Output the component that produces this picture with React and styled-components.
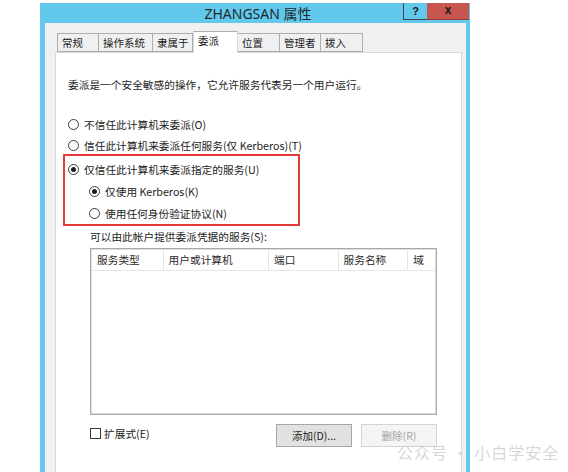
import React from "react";
import styled, { createGlobalStyle } from "styled-components";

const GlobalStyle = createGlobalStyle`
  html, body {
    margin: 0;
    padding: 0;
    background: #fff;
    overflow: hidden;
  }
  body {
    width: 568px;
    height: 472px;
    font-family: "Noto Sans CJK SC", "Noto Sans", sans-serif;
    color: #1b1b1b;
  }
`;

const tabs = [
  { label: "常规", width: 42 },
  { label: "操作系统", width: 54 },
  { label: "隶属于", width: 40 },
  { label: "委派", width: 45, active: true },
  { label: "位置", width: 42 },
  { label: "管理者", width: 41 },
  { label: "拨入", width: 42 },
];

const columns = [
  { label: "服务类型", width: 72 },
  { label: "用户或计算机", width: 106 },
  { label: "端口", width: 70 },
  { label: "服务名称", width: 70 },
  { label: "域", width: 27 },
];

function Radio({ checked, children }) {
  return (
    <Option>
      <RadioDot $checked={checked} />
      <span>{children}</span>
    </Option>
  );
}

function App() {
  return (
    <Page>
      <GlobalStyle />
      <Window>
        <TitleBar>
          <Title>ZHANGSAN 属性</Title>
          <TitleButtons>
            <HelpButton>?</HelpButton>
            <CloseButton>x</CloseButton>
          </TitleButtons>
        </TitleBar>
        <Body>
          <TabRow>
            {tabs.map((t) => (
              <Tab key={t.label} $active={t.active} $width={t.width}>
                {t.label}
              </Tab>
            ))}
          </TabRow>
          <Panel>
            <Description>
              委派是一个安全敏感的操作，它允许服务代表另一个用户运行。
            </Description>
            <Options>
              <Radio>不信任此计算机来委派(O)</Radio>
              <Radio>信任此计算机来委派任何服务(仅 Kerberos)(T)</Radio>
              <Highlight>
                <Radio checked>仅信任此计算机来委派指定的服务(U)</Radio>
                <SubOptions>
                  <Radio checked>仅使用 Kerberos(K)</Radio>
                  <Radio>使用任何身份验证协议(N)</Radio>
                </SubOptions>
              </Highlight>
            </Options>
            <Services>
              <ListLabel>可以由此帐户提供委派凭据的服务(S):</ListLabel>
              <ListBox>
                <ListHeader>
                  {columns.map((c) => (
                    <HeaderCell key={c.label} $width={c.width}>
                      {c.label}
                    </HeaderCell>
                  ))}
                </ListHeader>
              </ListBox>
              <Footer>
                <Check>
                  <CheckBox />
                  <span>扩展式(E)</span>
                </Check>
                <Buttons>
                  <Button>添加(D)...</Button>
                  <Button disabled>删除(R)</Button>
                </Buttons>
              </Footer>
            </Services>
          </Panel>
        </Body>
      </Window>
      <Watermark>公众号 · 小白学安全</Watermark>
    </Page>
  );
}

const Page = styled.div`
  position: relative;
  padding: 3px 0 0 40px;
`;

const Window = styled.div`
  width: 430px;
  height: 500px;
  background: #62c9ec;
  display: flex;
  flex-direction: column;
`;

const TitleBar = styled.div`
  position: relative;
  height: 25px;
  display: flex;
  align-items: center;
  justify-content: center;
`;

const Title = styled.div`
  font-family: "Noto Sans", "Noto Sans CJK SC", sans-serif;
  font-size: 14px;
  color: #1f2a30;
  margin-left: 6px;
`;

const TitleButtons = styled.div`
  position: absolute;
  top: 0;
  right: 1px;
  display: flex;
`;

const HelpButton = styled.div`
  width: 24px;
  height: 17px;
  box-sizing: border-box;
  border-left: 1px solid #3c4a50;
  border-bottom: 1px solid #3c4a50;
  display: flex;
  align-items: center;
  justify-content: center;
  font-family: "Liberation Sans", sans-serif;
  font-weight: bold;
  font-size: 11px;
  color: #1a1a1a;
`;

const CloseButton = styled.div`
  width: 42px;
  height: 17px;
  background: #c75550;
  border-bottom: 1px solid #8e3a36;
  box-sizing: border-box;
  display: flex;
  align-items: center;
  justify-content: center;
  font-family: "Liberation Sans", sans-serif;
  font-weight: bold;
  font-size: 12px;
  color: #1a1a1a;
  padding-bottom: 2px;
`;

const Body = styled.div`
  flex: 1;
  margin: 0 4px 0 5px;
  background: #f0f0f0;
  padding: 7px 4px 0 10px;
`;

const TabRow = styled.div`
  display: flex;
  align-items: flex-end;
  height: 22px;
  padding-left: 2px;
`;

const Tab = styled.div`
  width: ${(p) => p.$width}px;
  height: ${(p) => (p.$active ? 22 : 19)}px;
  box-sizing: border-box;
  border: 1px solid #adadad;
  border-left: ${(p) => (p.$active ? "1px solid #d9d9d9" : "none")};
  border-right: ${(p) => (p.$active ? "1px solid #d9d9d9" : "1px solid #adadad")};
  border-bottom: ${(p) => (p.$active ? "none" : "1px solid #adadad")};
  background: ${(p) => (p.$active ? "#fff" : "#f0f0f0")};
  font-size: 10.5px;
  line-height: 17px;
  padding-left: 4px;
  position: relative;
  z-index: ${(p) => (p.$active ? 1 : 0)};
  margin-bottom: ${(p) => (p.$active ? "-1px" : "0")};
  &:first-child {
    border-left: 1px solid #adadad;
  }
`;

const Panel = styled.div`
  background: #fff;
  border: 1px solid #d9d9d9;
  height: 430px;
  padding: 24px 0 0 12px;
  font-size: 10.7px;
`;

const Description = styled.div`
  line-height: 16px;
`;

const Options = styled.div`
  margin-top: 23px;
  display: flex;
  flex-direction: column;
  gap: 5px;
`;

const Option = styled.div`
  display: flex;
  align-items: center;
  gap: 5px;
  height: 16px;
`;

const RadioDot = styled.span`
  width: 11px;
  height: 11px;
  box-sizing: border-box;
  border-radius: 50%;
  border: 1px solid #3a3a3a;
  background: #fff;
  display: flex;
  align-items: center;
  justify-content: center;
  &::after {
    content: "";
    width: 5px;
    height: 5px;
    border-radius: 50%;
    background: ${(p) => (p.$checked ? "#1e1e1e" : "transparent")};
  }
`;

const Highlight = styled.div`
  width: 237px;
  box-sizing: border-box;
  margin-left: -5px;
  margin-top: -4px;
  border: 2px solid #e63b3b;
  padding: 5px 0 3px 3px;
  display: flex;
  flex-direction: column;
  gap: 6px;
`;

const SubOptions = styled.div`
  display: flex;
  flex-direction: column;
  gap: 6px;
  padding-left: 21px;
`;

const Services = styled.div`
  margin-top: 3px;
  padding-left: 22px;
  width: 347px;
`;

const ListLabel = styled.div`
  line-height: 16px;
`;

const ListBox = styled.div`
  margin-top: 3px;
  height: 165px;
  border: 1px solid #a9a9a9;
  box-shadow: inset 0 0 0 1px #dcdcdc;
  background: #fff;
`;

const ListHeader = styled.div`
  display: flex;
  height: 20px;
  border-bottom: 1px solid #e6e6e6;
  margin: 1px 1px 0;
`;

const HeaderCell = styled.div`
  width: ${(p) => p.$width}px;
  box-sizing: border-box;
  border-right: 1px solid #e3e3e3;
  padding-left: 5px;
  line-height: 20px;
  color: #2a2a2a;
  &:last-child {
    border-right: none;
  }
`;

const Footer = styled.div`
  margin-top: 9px;
  display: flex;
  justify-content: space-between;
  align-items: flex-start;
`;

const Check = styled.div`
  display: flex;
  align-items: center;
  gap: 3px;
  margin-top: 1px;
  height: 16px;
`;

const CheckBox = styled.span`
  width: 11px;
  height: 11px;
  box-sizing: border-box;
  border: 1px solid #3a3a3a;
  background: #fff;
`;

const Buttons = styled.div`
  display: flex;
  gap: 9px;
`;

const Button = styled.button`
  width: 76px;
  height: 23px;
  font-family: "Noto Sans CJK SC", "Noto Sans", sans-serif;
  font-size: 10.5px;
  padding: 0;
  border: 1px solid ${(p) => (p.disabled ? "#d4d4d4" : "#a6a6a6")};
  background: ${(p) => (p.disabled ? "#f4f4f4" : "#e1e1e1")};
  color: ${(p) => (p.disabled ? "#a3a3a3" : "#1b1b1b")};
`;

const Watermark = styled.div`
  position: absolute;
  left: 397px;
  top: 440px;
  font-size: 16px;
  letter-spacing: 1px;
  color: rgba(205, 205, 205, 0.8);
  white-space: nowrap;
`;

export default App;
